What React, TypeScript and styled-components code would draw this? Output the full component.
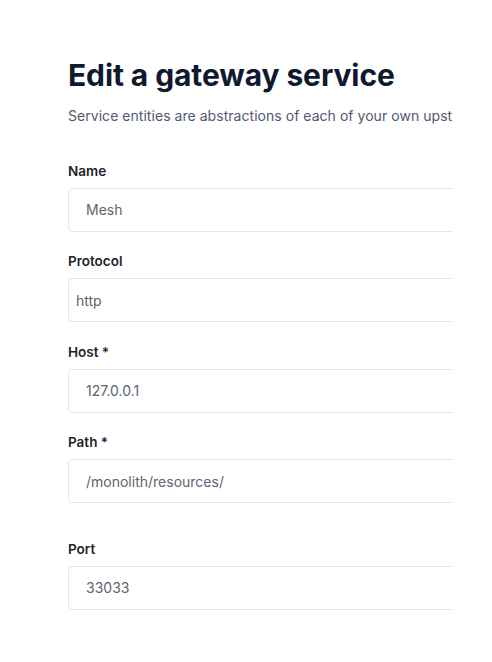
import React from "react";
import styled, { createGlobalStyle } from "styled-components";

const GlobalStyle = createGlobalStyle`
  html, body {
    margin: 0;
    padding: 0;
    background: #ffffff;
  }
  body {
    font-family: Inter, "Noto Sans", "Liberation Sans", sans-serif;
    -webkit-font-smoothing: antialiased;
  }
`;

const Page = styled.div`
  width: 492px;
  height: 662px;
  box-sizing: border-box;
  padding: 57px 0 0 68px;
`;

const Clip = styled.div`
  width: 385px;
  overflow: hidden;
`;

const Form = styled.form`
  width: 640px;
  display: flex;
  flex-direction: column;
`;

const Title = styled.h1`
  margin: 0;
  font-size: 30px;
  line-height: 36px;
  font-weight: 700;
  color: #0f1a2e;
  letter-spacing: -0.1px;
`;

const Subtitle = styled.p`
  margin: 13px 0 15px;
  font-size: 14px;
  line-height: 20px;
  color: #52596e;
  letter-spacing: 0.04px;
  white-space: nowrap;
`;

const Field = styled.div<{ $extra?: number }>`
  display: flex;
  flex-direction: column;
  gap: 9px;
  margin-top: ${(p) => 21.5 + (p.$extra ?? 0)}px;
`;

const Label = styled.label`
  font-size: 13.5px;
  line-height: 16px;
  font-weight: 600;
  color: #1f2329;
`;

const Input = styled.div<{ $inset?: number }>`
  height: 44px;
  box-sizing: border-box;
  border: 1px solid #e3e6ec;
  border-radius: 4px;
  display: flex;
  align-items: center;
  padding-left: ${(p) => p.$inset ?? 17}px;
  font-size: 14px;
  color: #5d6470;
`;

const fields = [
  { label: "Name", value: "Mesh", inset: 17, extra: 0 },
  { label: "Protocol", value: "http", inset: 7, extra: 0 },
  { label: "Host *", value: "127.0.0.1", inset: 17, extra: 0 },
  { label: "Path *", value: "/monolith/resources/", inset: 17, extra: 0 },
  { label: "Port", value: "33033", inset: 17, extra: 16 },
];

export default function App() {
  return (
    <>
      <GlobalStyle />
      <Page>
        <Clip>
          <Form>
            <Title>Edit a gateway service</Title>
            <Subtitle>
              Service entities are abstractions of each of your own upstream services.
            </Subtitle>
            {fields.map((f) => (
              <Field key={f.label} $extra={f.extra}>
                <Label>{f.label}</Label>
                <Input $inset={f.inset}>{f.value}</Input>
              </Field>
            ))}
          </Form>
        </Clip>
      </Page>
    </>
  );
}
